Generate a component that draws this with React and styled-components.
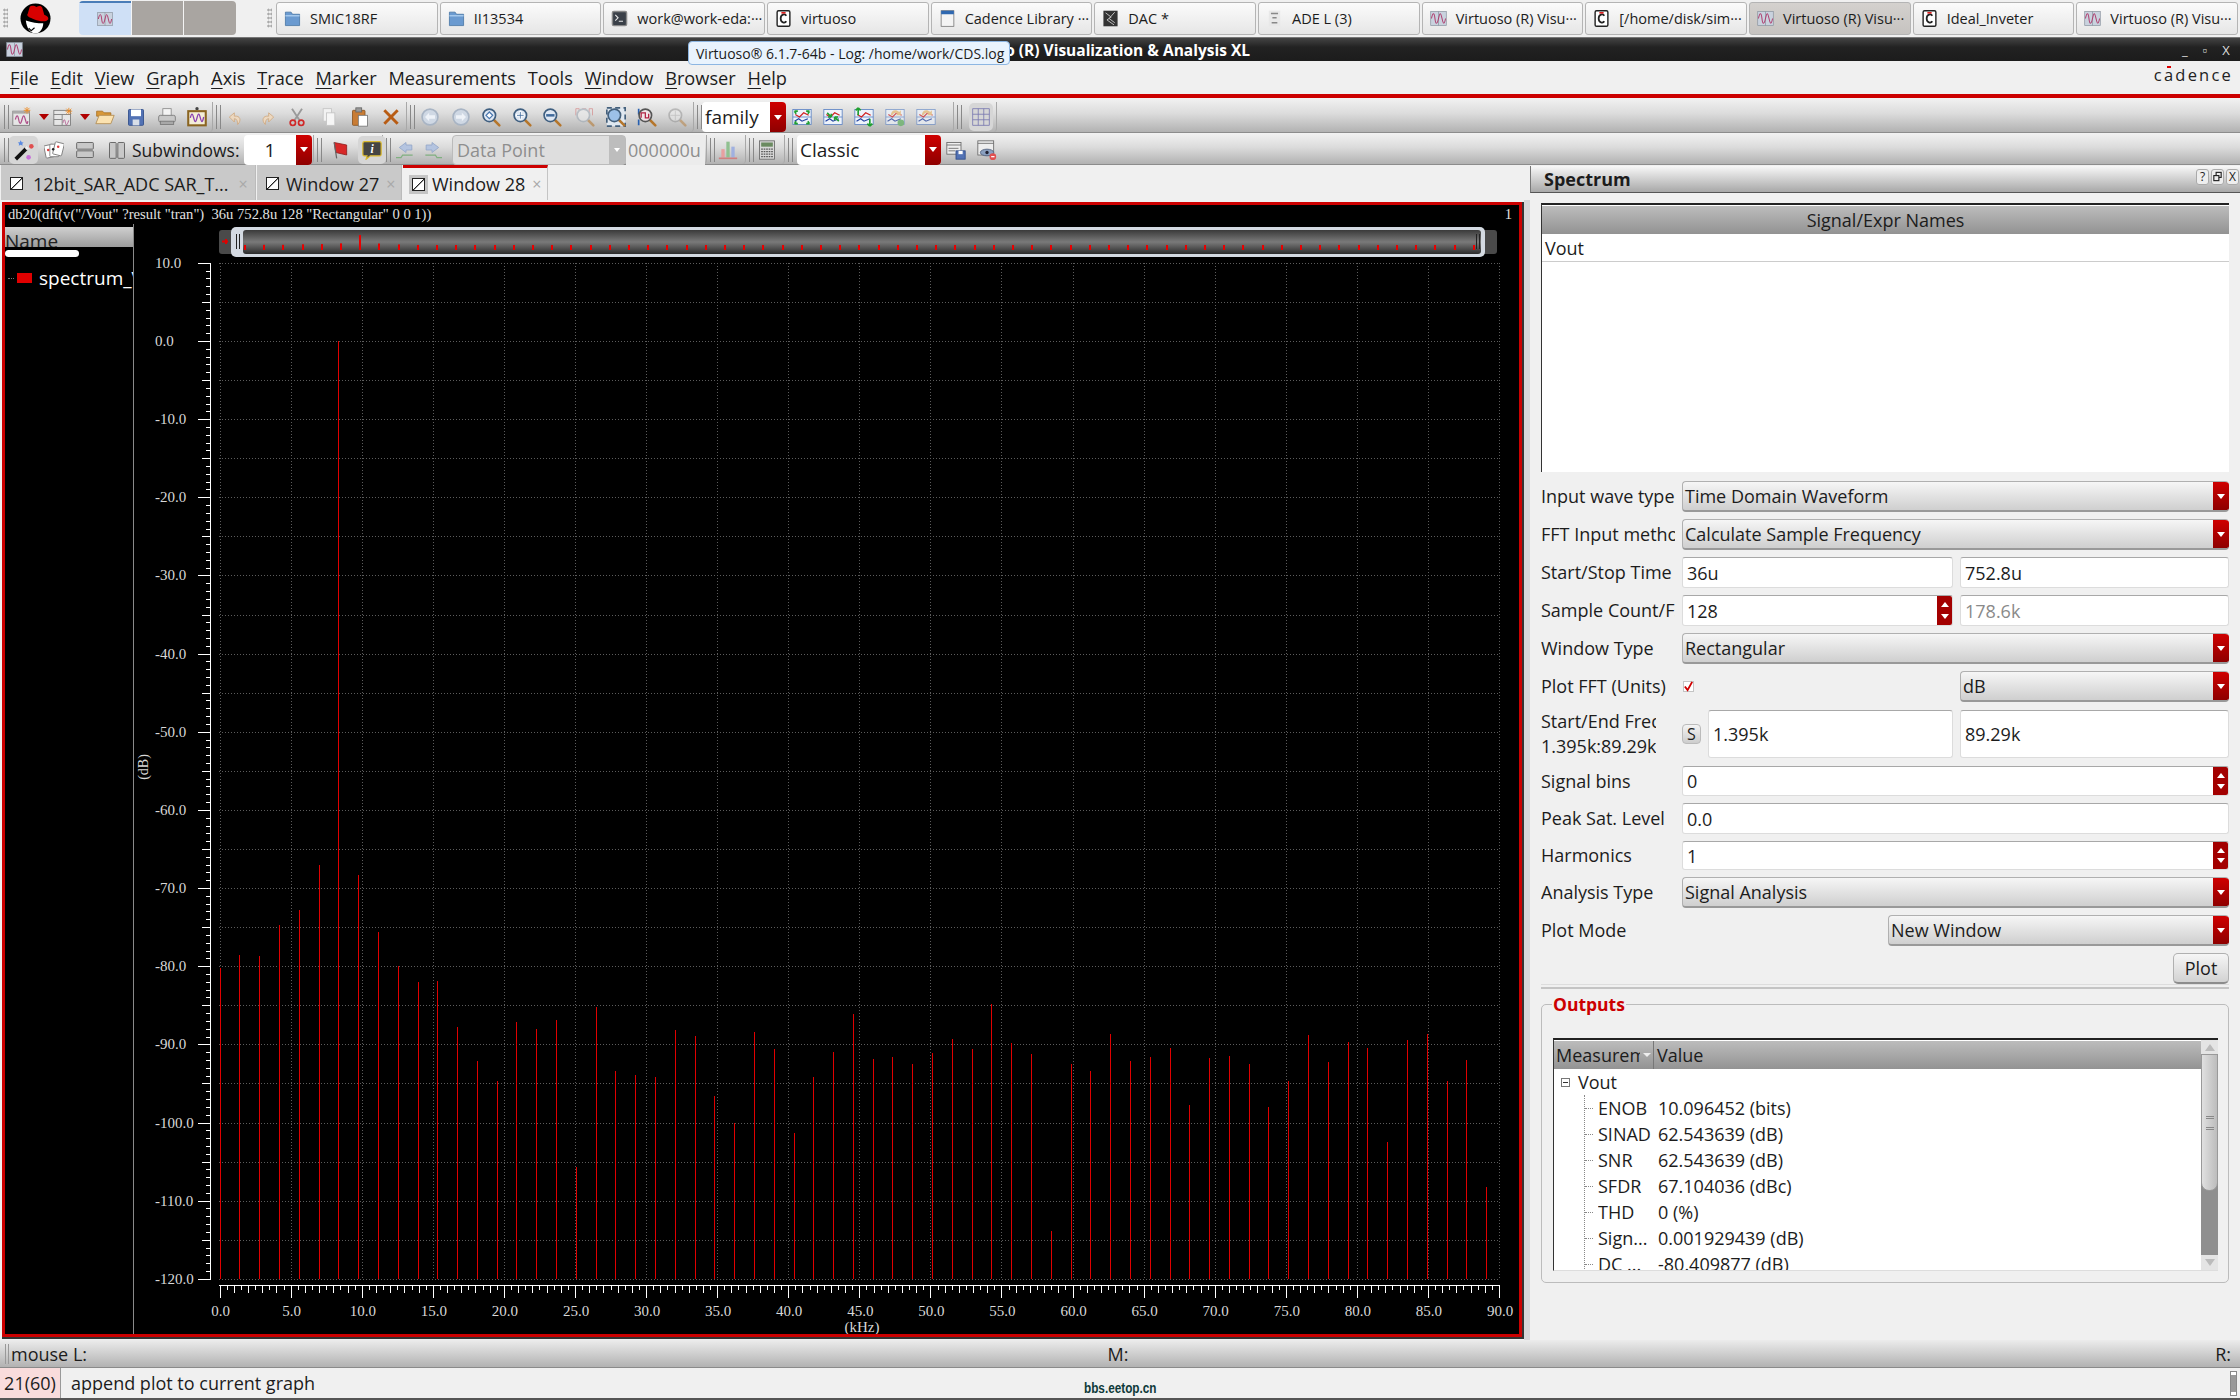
import React from 'react'
import styled, { createGlobalStyle } from 'styled-components'

const GlobalStyle = createGlobalStyle`
  html, body { margin: 0; padding: 0; background: #f0f0f0; }
  body { font-family: "Open Sans", "Liberation Sans", sans-serif; color: #1c1c1c; }
  * { box-sizing: border-box; }
`

const BAR = 'linear-gradient(#f2f2f2, #dcdcdc 45%, #b2b2b2)'
const RED = 'linear-gradient(#cf0000, #8e0000)'

const Page = styled.div`
  position: relative;
  width: 2240px;
  height: 1400px;
  overflow: hidden;
  display: flex;
  flex-direction: column;
  background: #f0f0f0;
`

/* --- panel / taskbar --- */
const Taskbar = styled.div`
  height: 36px;
  display: flex;
  align-items: center;
  background: #f0f0f0;
  flex-shrink: 0;
`
const Grip = styled.div`
  width: 5px;
  height: 20px;
  margin: 0 ${p => p.$after || 0}px 0 ${p => p.$before || 0}px;
  background-image: radial-gradient(#aaa 1px, transparent 1.2px);
  background-size: 3px 4px;
`
const Pager = styled.div`
  width: 157px;
  height: 34px;
  margin-left: 28px;
  display: grid;
  grid-template-columns: 52px 51px 1fr;
  gap: 1px;
  background: #f4f4f4;
  border-radius: 4px;
  overflow: hidden;
`
const PagerCell = styled.div`
  display: flex;
  align-items: center;
  justify-content: center;
  background: ${p => (p.$on ? '#cfe0f6' : '#a9a5a1')};
  border-top: ${p => (p.$on ? '2px solid #4a7db8' : 'none')};
`
const TaskList = styled.div`
  flex: 1;
  margin-left: 31px;
  margin-right: 2px;
  display: grid;
  grid-template-columns: repeat(12, 1fr);
  gap: 2px;
`
const TaskButton = styled.div`
  height: 33px;
  display: flex;
  align-items: center;
  gap: 9px;
  padding-left: 7px;
  overflow: hidden;
  white-space: nowrap;
  font-size: 14.5px;
  border: 1px solid #b4b4b4;
  border-radius: 3px;
  background: ${p => (p.$active ? 'linear-gradient(#d4d1ce, #c6c3c0)' : 'linear-gradient(#fbfbfb, #e6e6e6)')};
`

/* --- window title --- */
const TitleBar = styled.div`
  height: 24px;
  margin-top: 1px;
  display: flex;
  align-items: center;
  flex-shrink: 0;
  padding: 0 8px 0 6px;
  background: linear-gradient(#444, #222 40%, #1c1c1c);
  border-top: 1px solid #777;
  color: #fff;
`
const TitleText = styled.div`
  margin-left: auto;
  margin-right: 932px;
  font-size: 15.5px;
  font-weight: 700;
  white-space: nowrap;
`
const WinControls = styled.div`
  display: flex;
  gap: 15px;
  font-size: 13px;
  color: #ddd;
  width: 50px;
`
const Tip = styled.div`
  position: absolute;
  left: 688px;
  top: 41px;
  width: 322px;
  height: 24px;
  display: flex;
  align-items: center;
  padding-left: 7px;
  font-size: 14px;
  white-space: nowrap;
  background: #e9f3fd;
  border: 1px solid #8db6e2;
  border-radius: 4px;
  z-index: 5;
`

/* --- menu --- */
const MenuBar = styled.div`
  height: 33px;
  display: flex;
  align-items: center;
  padding-left: 10px;
  gap: 11.8px;
  font-size: 18.2px;
  background: #f0f0f0;
  flex-shrink: 0;
`
const MenuItem = styled.span`
  white-space: nowrap;
  u { text-underline-offset: 3px; text-decoration-thickness: 1px; }
`
const Logo = styled.div`
  margin-left: auto;
  margin-right: 7px;
  margin-top: -6px;
  font-size: 16.5px;
  letter-spacing: 2.2px;
  color: #222;
`
const LogoA = styled.span`
  position: relative;
  &::before {
    content: '';
    position: absolute;
    left: 3px;
    top: 3px;
    width: 4px;
    height: 2px;
    background: #d00;
  }
`
const RedRule = styled.div`
  height: 4px;
  background: #cc0000;
  flex-shrink: 0;
`

/* --- toolbars --- */
const Toolbar = styled.div`
  height: ${p => p.$h}px;
  display: flex;
  align-items: center;
  background: ${BAR};
  border-bottom: 1px solid #8c8c8c;
  flex-shrink: 0;
  padding: ${p => p.$pt}px 0 0 1px;
`
const ToolGroup = styled.div`
  height: 100%;
  display: flex;
  align-items: center;
  width: ${p => p.$w}px;
  flex-shrink: 0;
  border-right: 1px solid #a8a8a8;
  border-radius: 0 0 4px 0;
`
const Handle = styled.div`
  width: 5px;
  height: 24px;
  margin-left: 3px;
  flex-shrink: 0;
  border-left: 1px solid #888;
  border-right: 1px solid #888;
`
const Tool = styled.div`
  display: flex;
  align-items: center;
  justify-content: center;
  flex-shrink: 0;
  width: ${p => p.$w || 20}px;
  height: ${p => p.$h || 28}px;
  margin-left: ${p => p.$ml || 0}px;
  border-radius: 5px;
  background: ${p => (p.$on ? '#d6d6d6' : 'transparent')};
`
const DropMark = styled.div`
  width: 0;
  height: 0;
  border-left: 5px solid transparent;
  border-right: 5px solid transparent;
  border-top: 6px solid #b00000;
`
const Combo = styled.div`
  width: ${p => p.$w}px;
  height: 30px;
  margin-left: ${p => p.$ml || 0}px;
  flex-shrink: 0;
  display: flex;
  align-items: center;
  background: #fff;
  border-radius: 4px;
  overflow: hidden;
  font-size: 19px;
`
const ComboText = styled.div`
  flex: 1;
  padding-left: ${p => p.$pad ?? 3}px;
  text-align: ${p => p.$align || 'left'};
`
const RedDrop = styled.div`
  width: 16px;
  height: 100%;
  flex-shrink: 0;
  display: flex;
  align-items: center;
  justify-content: center;
  background: ${RED};
  &::after {
    content: '';
    border-left: 4px solid transparent;
    border-right: 4px solid transparent;
    border-top: 5px solid #fff;
  }
`
const ToolLabel = styled.div`
  width: 112px;
  margin-left: 5px;
  flex-shrink: 0;
  font-size: 17.5px;
  white-space: nowrap;
`
const DisabledCombo = styled.div`
  width: 174px;
  height: 30px;
  margin-left: 10px;
  flex-shrink: 0;
  display: flex;
  align-items: center;
  font-size: 18px;
  color: #8e8e8e;
  background: #dedede;
  border: 1px solid #bbb;
  border-radius: 4px;
  padding-left: 4px;
`
const DisabledDrop = styled.div`
  margin-left: auto;
  width: 16px;
  height: 100%;
  background: #bdbdbd;
  display: flex;
  align-items: center;
  justify-content: center;
  &::after {
    content: '';
    border-left: 3px solid transparent;
    border-right: 3px solid transparent;
    border-top: 4px solid #fff;
  }
`
const DisabledField = styled.div`
  width: 79px;
  height: 30px;
  flex-shrink: 0;
  display: flex;
  align-items: center;
  font-size: 18px;
  color: #8e8e8e;
  background: #ececec;
  overflow: hidden;
  padding-left: 2px;
`

/* --- main area --- */
const Main = styled.div`
  height: 1175px;
  flex-shrink: 0;
  display: flex;
`
const LeftCol = styled.div`
  width: 1524px;
  display: flex;
  flex-direction: column;
`
const TabRow = styled.div`
  height: 35px;
  padding-left: 1px;
  display: flex;
  flex-shrink: 0;
  background: #f0f0f0;
`
const Tab = styled.div`
  width: ${p => p.$w}px;
  display: flex;
  align-items: center;
  padding-left: 9px;
  padding-top: ${p => (p.$on ? 0 : 2)}px;
  gap: ${p => p.$gap || 7}px;
  font-size: 18px;
  white-space: nowrap;
  margin-right: 1px;
  background: ${p => (p.$on ? '#f0f0f0' : '#c9c9c9')};
  border-top: ${p => (p.$on ? '3px solid #cc0000' : 'none')};
  border-right: 1px solid ${p => (p.$on ? '#c4c4c4' : '#bbb')};
`
const TabIcon = styled.div`
  width: 13px;
  height: 13px;
  flex-shrink: 0;
  border: 1.5px solid #222;
  background: linear-gradient(135deg, #fff 47%, #222 48%, #222 54%, #fff 55%);
  outline: ${p => (p.$on ? '3px solid #c4c4c4' : 'none')};
`
const TabClose = styled.span`
  margin-left: auto;
  margin-right: 9px;
  font-size: 16px;
  color: #a8a8a8;
`
const PlotFrame = styled.div`
  width: 1522px;
  height: 1137px;
  margin: 2px 0 0 2px;
  border-right: 2px solid #333;
  border-bottom: 2px solid #333;
`
const PlotWindow = styled.div`
  width: 100%;
  height: 100%;
  border: 3px solid #cc0000;
  background: #000;
  display: flex;
  flex-direction: column;
  overflow: hidden;
`
const ExprLine = styled.div`
  height: 19px;
  flex-shrink: 0;
  display: flex;
  justify-content: space-between;
  align-items: center;
  padding: 0 7px 0 3px;
  font-family: "Liberation Serif", serif;
  font-size: 14.6px;
  white-space: pre;
  color: #e2e2e2;
`
const PlotBody = styled.div`
  flex: 1;
  display: flex;
  min-height: 0;
`
const Legend = styled.div`
  width: 129px;
  flex-shrink: 0;
  border-right: 1px solid #8a8a8a;
  padding-top: 3px;
  color: #fff;
`
const LegendHead = styled.div`
  height: 20px;
  overflow: hidden;
  font-size: 19px;
  line-height: 28px;
  color: #222;
  background: linear-gradient(#d0d0d0, #9c9c9c);
`
const LegendPill = styled.div`
  width: 74px;
  height: 7px;
  margin-top: 3px;
  background: #fff;
  border-radius: 4px;
`
const LegendRow = styled.div`
  display: flex;
  align-items: center;
  height: 26px;
  margin-top: 8px;
  white-space: nowrap;
  overflow: hidden;
  font-size: 19px;
`
const LegendDots = styled.div`
  width: 6px;
  height: 1px;
  margin: 0 3px;
  flex-shrink: 0;
  border-top: 1px dotted #777;
`
const Swatch = styled.div`
  width: 15px;
  height: 10px;
  flex-shrink: 0;
  margin-right: 7px;
  background: #e00000;
`
const Chart = styled.svg`
  display: block;
  flex-shrink: 0;
`
const Splitter = styled.div`
  width: 6px;
  margin-top: 35px;
  background: #d6d6d8;
`

/* --- spectrum panel --- */
const Panel = styled.div`
  flex: 1;
  display: flex;
  flex-direction: column;
  padding-top: 1px;
  font-size: 18px;
`
const PanelHead = styled.div`
  height: 27px;
  flex-shrink: 0;
  display: flex;
  align-items: center;
  padding: 0 1px 0 13px;
  font-size: 18px;
  font-weight: 700;
  background: linear-gradient(#f8f8f8, #a8a8a8);
  border-left: 1px solid #777;
  border-bottom: 1px solid #555;
`
const HeadButtons = styled.div`
  margin-left: auto;
  display: flex;
  gap: 2px;
  margin-top: -5px;
`
const HeadButton = styled.div`
  width: 13px;
  height: 16px;
  display: flex;
  align-items: center;
  justify-content: center;
  font-size: 12px;
  font-weight: 400;
  border: 1px solid #aaa;
  border-radius: 3px;
  background: #eee;
`
const PanelBody = styled.div`
  flex: 1;
  padding: 10px 11px 0 11px;
  display: flex;
  flex-direction: column;
`
const NameTable = styled.div`
  height: 269px;
  flex-shrink: 0;
  background: #fff;
  border-top: 2px solid #222;
  border-left: 1px solid #333;
  display: flex;
  flex-direction: column;
`
const NameHead = styled.div`
  height: 28px;
  margin-top: 1px;
  display: flex;
  align-items: center;
  justify-content: center;
  background: linear-gradient(#bcbcbc, #929292);
`
const NameRow = styled.div`
  height: 28px;
  display: flex;
  align-items: center;
  padding-left: 3px;
  border-bottom: 1px solid #ccc;
`
const Form = styled.div`
  margin-top: 9px;
  display: flex;
  flex-direction: column;
  gap: 7px;
`
const Row = styled.div`
  min-height: ${p => p.$h || 31}px;
  display: flex;
  align-items: center;
  gap: 7px;
`
const Label = styled.div`
  width: ${p => p.$w || 134}px;
  margin-right: ${p => p.$mr ?? 0}px;
  flex-shrink: 0;
  overflow: hidden;
  white-space: nowrap;
  line-height: 25px;
`
const Select = styled.div`
  height: 31px;
  flex: ${p => (p.$w ? `0 0 ${p.$w}px` : 1)};
  margin-left: ${p => (p.$push ? 'auto' : 0)};
  display: flex;
  align-items: center;
  padding-left: 2px;
  border: 1px solid #b0b0b0;
  border-bottom: 2px solid #999;
  border-right: 0;
  border-radius: 4px;
  overflow: hidden;
  background: linear-gradient(#f6f6f6, #cfcfcf);
`
const SelectText = styled.div`
  flex: 1;
`
const Field = styled.div`
  height: ${p => p.$h || 31}px;
  flex: ${p => (p.$w ? `0 0 ${p.$w}px` : 1)};
  display: flex;
  align-items: center;
  padding-left: ${p => p.$pad || 4}px;
  overflow: hidden;
  color: ${p => (p.$dim ? '#8a8a8a' : 'inherit')};
  background: #fff;
  border: 1px solid #dcdcdc;
  border-top: 1px solid #a8a8a8;
  border-radius: 3px;
`
const Spin = styled.div`
  margin-left: auto;
  margin-right: -1px;
  width: 16px;
  height: 100%;
  flex-shrink: 0;
  display: flex;
  flex-direction: column;
  align-items: center;
  justify-content: space-evenly;
  background: #a30000;
`
const SpinArrow = styled.div`
  width: 0;
  height: 0;
  border-left: 4px solid transparent;
  border-right: 4px solid transparent;
  border-${p => (p.$up ? 'bottom' : 'top')}: 5px solid #fff;
`
const CheckCell = styled.div`
  flex: 0 0 271px;
  display: flex;
  align-items: center;
`
const CheckBox = styled.div`
  width: 11px;
  height: 11px;
  margin-left: 1px;
  display: flex;
  align-items: center;
  justify-content: center;
  background: #fff;
  border: 1px solid #c4c4c4;
`
const SmallButton = styled.div`
  width: 19px;
  height: 20px;
  flex-shrink: 0;
  display: flex;
  align-items: center;
  justify-content: center;
  font-size: 16px;
  border: 1px solid #bbb;
  border-radius: 4px;
  background: linear-gradient(#f4f4f4, #cdcdcd);
`
const PlotButton = styled.div`
  width: 56px;
  height: 31px;
  margin-left: auto;
  display: flex;
  align-items: center;
  justify-content: center;
  border: 1px solid #b0b0b0;
  border-bottom: 2px solid #8c8c8c;
  border-radius: 5px;
  background: linear-gradient(#f6f6f6, #d2d2d2);
`
const Divider = styled.div`
  height: 5px;
  flex-shrink: 0;
  border-top: 1px solid #ddd;
  border-bottom: 2px solid #c4c4c4;
`
const OutputBox = styled.div`
  position: relative;
  height: 279px;
  margin-top: 15px;
  padding: 33px 10px 0 11px;
  border: 1px solid #bcbcbc;
  border-radius: 5px;
`
const OutputTitle = styled.div`
  position: absolute;
  left: 10px;
  top: -13px;
  padding: 0 1px;
  font-size: 17.5px;
  font-weight: 700;
  color: #cc0000;
  background: #f0f0f0;
`
const TreeTable = styled.div`
  height: 233px;
  display: flex;
  background: #fff;
  border-top: 2px solid #222;
  border-left: 1px solid #333;
  border-bottom: 1px solid #ddd;
  overflow: hidden;
`
const TreeMain = styled.div`
  flex: 1;
  min-width: 0;
`
const TreeHead = styled.div`
  height: 28px;
  margin-top: 1px;
  display: flex;
  background: linear-gradient(#bcbcbc, #939393);
`
const HeadCell = styled.div`
  width: ${p => p.$w || 'auto'};
  padding-left: ${p => p.$pad || 2}px;
  display: flex;
  align-items: center;
  overflow: hidden;
  white-space: nowrap;
  border-right: ${p => (p.$w ? '1px solid #777' : 'none')};
`
const HeadClip = styled.div`
  width: 84px;
  overflow: hidden;
  flex-shrink: 0;
`
const SortMark = styled.span`
  margin-left: 3px;
  width: 0;
  height: 0;
  border-left: 4px solid transparent;
  border-right: 4px solid transparent;
  border-top: 4px solid #eee;
  flex-shrink: 0;
`
const ParentRow = styled.div`
  height: 26px;
  display: flex;
  align-items: center;
  padding-left: 7px;
`
const Expander = styled.div`
  width: 9px;
  height: 9px;
  margin-right: 8px;
  display: flex;
  align-items: center;
  justify-content: center;
  border: 1px solid #777;
  &::after {
    content: '';
    width: 5px;
    height: 1px;
    background: #333;
  }
`
const Children = styled.div`
  margin-left: 30px;
  border-left: 1px dotted #888;
`
const ChildRow = styled.div`
  height: 26px;
  display: flex;
  align-items: center;
  white-space: nowrap;
`
const ChildDots = styled.div`
  width: 8px;
  margin-right: 5px;
  border-top: 1px dotted #888;
`
const ChildName = styled.div`
  width: 60px;
  overflow: hidden;
`
const Scrollbar = styled.div`
  width: 17px;
  flex-shrink: 0;
  display: flex;
  flex-direction: column;
  background: #8f8f8f;
`
const ScrollEnd = styled.div`
  height: ${p => p.$h}px;
  flex-shrink: 0;
  display: flex;
  align-items: center;
  justify-content: center;
  background: #e4e4e4;
  &::after {
    content: '';
    border-left: 5px solid transparent;
    border-right: 5px solid transparent;
    border-${p => (p.$up ? 'bottom' : 'top')}: 7px solid #bbb;
  }
`
const ScrollThumb = styled.div`
  height: 137px;
  flex-shrink: 0;
  display: flex;
  align-items: center;
  justify-content: center;
  background: linear-gradient(90deg, #e0e0e0, #bcbcbc);
  border-radius: 0 0 8px 8px;
  border: 1px solid #999;
  &::after {
    content: '';
    width: 8px;
    height: 8px;
    border-top: 3px double #888;
    border-bottom: 3px double #888;
  }
`
const ScrollGap = styled.div`
  flex: 1;
`

/* --- status --- */
const StatusBar = styled.div`
  height: 28px;
  flex-shrink: 0;
  display: flex;
  align-items: center;
  justify-content: space-between;
  padding: 0 9px 0 5px;
  background: linear-gradient(#ececec, #b2b2b2);
  border-bottom: 1px solid #8a8a8a;
  font-size: 18px;
`
const StatusSide = styled.div`
  display: flex;
  align-items: center;
  gap: 2px;
  width: 300px;
  justify-content: ${p => (p.$end ? 'flex-end' : 'flex-start')};
`
const StatusGrip = styled.div`
  width: 4px;
  height: 20px;
  border-left: 1px solid #999;
  border-right: 1px solid #999;
`
const MessageBar = styled.div`
  flex: 1;
  min-height: 0;
  display: flex;
  align-items: center;
  font-size: 18px;
  border-bottom: 2px solid #555;
`
const LineNo = styled.div`
  width: 61px;
  height: 100%;
  display: flex;
  align-items: center;
  justify-content: center;
  background: #f9dcdc;
  border-right: 1px solid #999;
`
const Message = styled.div`
  width: 1023px;
  padding-left: 10px;
`
const Watermark = styled.div`
  font-family: "Liberation Sans", sans-serif;
  font-size: 14px;
  font-weight: 700;
  color: #0e3a3a;
  padding-top: 9px;
  transform: scaleX(0.84);
  transform-origin: left center;
`
const MiniScroll = styled.div`
  margin-left: auto;
  margin-right: 3px;
  width: 7px;
  height: 25px;
  border: 1px solid #888;
  background: linear-gradient(#fff 15%, #999 15%, #999 85%, #fff 85%);
`

/* --- icons --- */
const Svg = styled.svg`
  display: block;
  flex-shrink: 0;
  opacity: ${p => p.$o || 1};
`
const WAVE = 'M4 12c1.5-6 3-6 4 0s2.5 6 4 0 2.5-6 4 0 2.5 6 3 2'
const Glass = ({ children, lens = '#dfe8f4', ring = '#3f5f80' }) => (
  <>
    <path d="M15 15l7 7" stroke="#b5762c" strokeWidth="3" strokeLinecap="round" />
    <circle cx="10" cy="10" r="7.5" fill={lens} stroke={ring} strokeWidth="2" />
    {children}
  </>
)
const traceBox = extra => (
  <>
    <rect x="1" y="3" width="22" height="18" fill="#eef3fb" stroke="#5b82c4" />
    <path d="M1 12h22" stroke="#5b82c4" />
    <path d="M4 9l5 3 5-5 6 3" fill="none" stroke="#d02020" strokeWidth="1.4" />
    <path d="M3 17l5-3 4 3 7-3" fill="none" stroke="#2040a0" strokeWidth="1.4" />
    {extra}
  </>
)
const ICONS = {
  wave: (
    <>
      <rect x="1" y="2" width="22" height="20" fill="#c9d2de" stroke="#8b94a0" />
      <path d="M12 2v20" stroke="#8b94a0" />
      <path d="M2 12c2-9 4-9 5 0s3 9 5 0 3-9 5 0 3 9 5 0" fill="none" stroke="#b04070" strokeWidth="1.5" />
    </>
  ),
  newWin: (
    <>
      <rect x="1" y="5" width="20" height="17" fill="#e6e6e6" stroke="#777" />
      <rect x="1" y="5" width="20" height="3" fill="#aaa" />
      <path d={WAVE} transform="translate(0 3)" fill="none" stroke="#b0508a" strokeWidth="1.5" />
      <path d="M18 0v8M14 4h8M15 1l6 6M21 1l-6 6" stroke="#ee8a20" strokeWidth="1" />
    </>
  ),
  newTbl: (
    <>
      <rect x="1" y="4" width="20" height="18" fill="#e6e6e6" stroke="#777" />
      <path d="M1 9h20M11 9v13M1 15h10" stroke="#777" />
      <path d="M12 19c1-5 2-5 3 0s2 2 4-3" fill="none" stroke="#b0508a" />
      <path d="M19 1v8M15 5h8M16 2l6 6M22 2l-6 6" stroke="#ee8a20" />
    </>
  ),
  folder: (
    <>
      <path d="M2 5h7l2 2h8v4H2z" fill="#d89838" stroke="#a87020" />
      <path d="M5 10h18l-4 10H1z" fill="#fbe2b0" stroke="#b08a50" />
    </>
  ),
  save: (
    <>
      <rect x="3" y="3" width="18" height="19" rx="1" fill="#5272b4" stroke="#2c4a88" />
      <rect x="6" y="3" width="12" height="8" fill="#fff" />
      <rect x="8" y="15" width="8" height="7" fill="#d8dee8" />
    </>
  ),
  print: (
    <>
      <rect x="7" y="2" width="10" height="9" fill="#f4f4f4" stroke="#888" />
      <rect x="2" y="10" width="20" height="8" rx="2" fill="#c8c8c8" stroke="#777" />
      <rect x="4" y="17" width="16" height="4" fill="#a8a8a8" stroke="#777" />
    </>
  ),
  frame: (
    <>
      <circle cx="12" cy="2" r="2" fill="#444" />
      <rect x="1.5" y="5" width="21" height="17" fill="#f4eed8" stroke="#8a6420" strokeWidth="2.5" />
      <path d="M4 13c1.5-6 2.5-6 4 0s2.5 6 4 0 2.5-6 4 0 2.5 6 4-1" fill="none" stroke="#8a40b0" strokeWidth="1.6" />
    </>
  ),
  undo: <path d="M14 21c5-5 3-11-4-10V7L4 12l6 6v-4c3 0 4 3 4 7z" fill="#ecd8c0" stroke="#cfa880" />,
  redo: <path d="M10 21c-5-5-3-11 4-10V7l6 5-6 6v-4c-3 0-4 3-4 7z" fill="#ecd8c0" stroke="#cfa880" />,
  cut: (
    <>
      <path d="M6 2l9 14M18 2L9 16" stroke="#9a9a9a" strokeWidth="2.2" />
      <circle cx="7" cy="19" r="3.2" fill="none" stroke="#d02828" strokeWidth="2" />
      <circle cx="17" cy="19" r="3.2" fill="none" stroke="#d02828" strokeWidth="2" />
    </>
  ),
  copy: (
    <>
      <rect x="5" y="2" width="10" height="15" fill="#f2f2f2" stroke="#c4c4c4" />
      <rect x="9" y="7" width="10" height="15" fill="#f6f6f6" stroke="#c4c4c4" />
    </>
  ),
  paste: (
    <>
      <rect x="3" y="4" width="15" height="18" rx="1" fill="#c97c34" stroke="#8a5420" />
      <rect x="7" y="1" width="7" height="5" fill="#999" stroke="#666" />
      <rect x="10" y="10" width="11" height="13" fill="#fff" stroke="#777" />
    </>
  ),
  del: <path d="M4 4l16 16M20 4L4 20" stroke="#b85c14" strokeWidth="3.5" />,
  back: (
    <>
      <circle cx="12" cy="12" r="9.5" fill="#cfd8e4" stroke="#a8b4c4" strokeWidth="2" />
      <path d="M6 12l5-5v3h7v4h-7v3z" fill="#eef2f8" />
    </>
  ),
  fwd: (
    <>
      <circle cx="12" cy="12" r="9.5" fill="#cfd8e4" stroke="#a8b4c4" strokeWidth="2" />
      <path d="M18 12l-5-5v3H6v4h7v3z" fill="#eef2f8" />
    </>
  ),
  zoomFit: <Glass><path d="M6 10l4-4 4 4-4 4z" fill="#fff" stroke="#4a78b0" strokeWidth="1.5" /></Glass>,
  zoomIn: (
    <Glass>
      <path d="M10 5v10M5 10h10" stroke="#fff" strokeWidth="3" />
      <path d="M10 6v8M6 10h8" stroke="#3f6a9c" />
    </Glass>
  ),
  zoomOut: <Glass><path d="M5 10h10" stroke="#3f6a9c" strokeWidth="3" /></Glass>,
  zoomPulse: (
    <g opacity="0.55">
      <path d="M1 10V2h4v8h4V2h4v8h4V2h4v8" fill="none" stroke="#d06060" />
      <Glass lens="#eee" ring="#9aa6b2" />
    </g>
  ),
  zoomBox: (
    <>
      <rect x="1" y="1" width="22" height="22" fill="#e0e8f0" stroke="#44607c" strokeDasharray="6 4" strokeWidth="2" />
      <Glass lens="#9cc0e8" ring="#44607c" />
    </>
  ),
  zoomX: (
    <>
      <path d="M2 2v7M2 22v-7" stroke="#2860b0" strokeWidth="2" />
      <Glass lens="#f0e4e8" ring="#555">
        <path d="M5 13V7h5v6h4V8" fill="none" stroke="#b02040" strokeWidth="1.5" />
      </Glass>
    </>
  ),
  zoomFade: <g opacity="0.45"><Glass lens="#eee" ring="#888"><path d="M10 4v12M4 10h12" stroke="#aaa" /></Glass></g>,
  traceA: traceBox(<path d="M3 5l4 0M3 5l2 3M21 5l-4 0M21 5l-2 3M3 20l4 0M3 20l2-3M21 20h-4M21 20l-2-3" stroke="#20a030" strokeWidth="2" />),
  traceB: traceBox(<path d="M5 7l5 5M10 12V8M10 12H6M19 17l-5-5M14 12v4M14 12h4" stroke="#20a030" strokeWidth="2" />),
  traceC: traceBox(<path d="M5 10V1M5 1L2 4M5 1l3 3M19 14v9M19 23l-3-3M19 23l3-3" stroke="#20a030" strokeWidth="2" />),
  traceD: (
    <g opacity="0.7">
      {traceBox(<path d="M7 10c0-6 6-8 10-4l2-2v6h-6l2-2c-2-2-5-1-6 2z" fill="#e8b870" />)}
      <circle cx="19" cy="19" r="4" fill="#60b060" />
    </g>
  ),
  traceE: <g opacity="0.7">{traceBox(<path d="M7 10c0-6 6-8 10-4l2-2v6h-6l2-2c-2-2-5-1-6 2z" fill="#e8b870" />)}</g>,
  grid: <path d="M2 2h20v20H2zM2 8.7h20M2 15.3h20M8.7 2v20M15.3 2v20" fill="none" stroke="#7878b0" />,
  wand: (
    <>
      <path d="M3 22L15 10" stroke="#111" strokeWidth="4" />
      <path d="M14 11l2-2" stroke="#eee" strokeWidth="4" />
      <path d="M10 2l1.500 3 3 .5-2 2 .5 3-3-1.500-3 1.500.5-3-2-2 3-.5z" fill="#5a8ae0" transform="scale(.7) translate(2 0)" />
      <circle cx="20" cy="8" r="2.5" fill="#e05050" />
      <circle cx="17" cy="20" r="2.5" fill="#c870d8" />
    </>
  ),
  cards: (
    <>
      <rect x="1" y="6" width="11" height="15" rx="1" fill="#fff" stroke="#777" transform="rotate(-12 6 13)" />
      <rect x="7" y="5" width="11" height="15" rx="1" fill="#fff" stroke="#777" />
      <rect x="12" y="3" width="11" height="15" rx="1" fill="#fff" stroke="#777" transform="rotate(14 17 10)" />
      <circle cx="11" cy="11" r="1.5" fill="#222" />
      <circle cx="17" cy="8" r="1.5" fill="#e04040" />
      <circle cx="5" cy="12" r="1.5" fill="#e04040" />
    </>
  ),
  rows: (
    <>
      <rect x="2" y="3" width="20" height="8" rx="1" fill="#c8c8c8" stroke="#555" />
      <rect x="2" y="13" width="20" height="8" rx="1" fill="#c8c8c8" stroke="#555" />
    </>
  ),
  cols: (
    <>
      <rect x="3" y="3" width="8" height="19" rx="1" fill="#c8c8c8" stroke="#555" />
      <rect x="13" y="3" width="8" height="19" rx="1" fill="#c8c8c8" stroke="#555" />
    </>
  ),
  flag: (
    <>
      <path d="M5 3l15 3v12L7 15z" fill="#d82828" stroke="#902020" />
      <path d="M5 3l3 19" stroke="#666" strokeWidth="1.5" />
    </>
  ),
  info: (
    <>
      <path d="M4 2h17a2 2 0 0 1 2 2v13a2 2 0 0 1-2 2H10l-5 4 1-4H3a2 2 0 0 1-2-2V4a2 2 0 0 1 2-2z" fill="#444" stroke="#d8b830" strokeWidth="1.5" />
      <text x="12" y="15" fontSize="14" fontWeight="700" fontStyle="italic" fill="#fff" textAnchor="middle" fontFamily="Liberation Serif">i</text>
    </>
  ),
  prev: (
    <>
      <path d="M4 9l8-6v3h7v6h-7v3z" fill="#b4c4e0" stroke="#93a6c8" />
      <path d="M0 21h6l2-3h12" fill="none" stroke="#80b080" strokeWidth="1.5" />
    </>
  ),
  next: (
    <>
      <path d="M20 9l-8-6v3H5v6h7v3z" fill="#b4c4e0" stroke="#93a6c8" />
      <path d="M4 18h12l2 3h6" fill="none" stroke="#80b080" strokeWidth="1.5" />
    </>
  ),
  chart: (
    <>
      <rect x="4" y="11" width="4" height="10" fill="#e8a0a0" />
      <rect x="10" y="2" width="4" height="19" fill="#90c090" />
      <rect x="16" y="8" width="4" height="13" fill="#a0b0e0" />
      <path d="M1 22h22" stroke="#d08080" strokeWidth="2" />
    </>
  ),
  calc: (
    <>
      <rect x="3" y="1" width="18" height="22" fill="#d8d8d8" stroke="#666" />
      <rect x="5" y="3" width="14" height="5" fill="#6a8a60" />
      <path d="M5 11h14M5 14h14M5 17h14M5 20h14" stroke="#555" strokeWidth="1.5" strokeDasharray="2 1" />
    </>
  ),
  saveWin: (
    <>
      <rect x="1" y="3" width="17" height="14" fill="#eee" stroke="#666" />
      <path d="M1 6h17M3 10h12M3 13h8" stroke="#666" />
      <rect x="12" y="13" width="11" height="10" fill="#5272b4" stroke="#2c4a88" />
      <rect x="15" y="13" width="5" height="4" fill="#fff" />
    </>
  ),
  eyeWin: (
    <>
      <rect x="1" y="1" width="19" height="17" fill="#eee" stroke="#666" />
      <path d="M1 4h19" stroke="#666" />
      <ellipse cx="12" cy="15" rx="8" ry="4" fill="#8aa0c0" stroke="#4a5a78" />
      <circle cx="12" cy="15" r="2" fill="#223" />
      <circle cx="19" cy="20" r="4" fill="#e05050" />
      <path d="M17 20h4" stroke="#fff" strokeWidth="1.5" />
    </>
  ),
  folderBlue: (
    <>
      <path d="M2 3h8l2 3h10v16H2z" fill="#6a9ad0" stroke="#3a6a9c" />
      <path d="M2 8h20" stroke="#a4c8ec" strokeWidth="2" />
    </>
  ),
  term: (
    <>
      <rect x="2" y="2" width="20" height="20" rx="2" fill="#3a4048" stroke="#888" strokeWidth="2" />
      <path d="M6 7l4 4-4 4M11 16h6" fill="none" stroke="#e8e8e8" strokeWidth="1.5" />
    </>
  ),
  vir: (
    <>
      <rect x="3" y="1" width="18" height="22" rx="2" fill="#fff" stroke="#222" strokeWidth="2" />
      <path d="M16 8c-2-3-8-2-8 4s6 7 8 4" fill="none" stroke="#222" strokeWidth="2.5" />
      <rect x="9" y="3" width="6" height="2" fill="#d00" />
    </>
  ),
  lib: (
    <>
      <rect x="3" y="1" width="18" height="22" fill="#f4f4f4" stroke="#666" />
      <rect x="3" y="1" width="18" height="5" fill="#2f68b0" />
    </>
  ),
  dac: (
    <>
      <rect x="2" y="1" width="20" height="22" fill="#333" />
      <path d="M5 4l8 6-6 4 10 7M18 3l-8 9 8 6" fill="none" stroke="#bbb" strokeWidth="1.4" />
    </>
  ),
  ade: (
    <>
      <rect x="4" y="1" width="16" height="22" fill="#e8e8e8" />
      <path d="M7 5h10M9 11h6M8 18h8" stroke="#888" strokeWidth="2" />
    </>
  ),
  restore: (
    <>
      <rect x="9" y="3" width="11" height="11" fill="none" stroke="#222" strokeWidth="2.5" />
      <rect x="4" y="10" width="11" height="11" fill="#eee" stroke="#222" strokeWidth="2.5" />
    </>
  )
}
const Icon = ({ name, size = 20, o }) => (
  <Svg viewBox="0 0 24 24" width={size} height={size} $o={o}>{ICONS[name]}</Svg>
)
const Tools = ({ list }) =>
  list.map(([name, ml, o], i) => (
    <Tool key={i} $ml={ml}><Icon name={name} o={o} /></Tool>
  ))

/* --- chart data --- */
const TOPS = [
  968, 955, 956, 925, 910, 865, 341, 875, 932, 966, 982, 981, 1027, 1061, 1081, 1022, 1029, 1020, 1167, 1007, 1071,
  1075, 1077, 1030, 1036, 1096, 1123, 1032, 1049, 1133, 1077, 1052, 1014, 1059, 1057, 1064, 1053, 1039, 1049, 1004,
  1043, 1054, 1231, 1064, 1071, 1034, 1061, 1057, 1048, 1105, 1058, 1056, 1064, 1107, 1081, 1035, 1062, 1042, 1048,
  1142, 1040, 1034, 1081, 1060, 1187
]
const fx = khz => 219.6 + khz * 14.216
const fy = db => 341 - db * 7.815
const range = (from, to, step) => {
  const out = []
  for (let v = from; v <= to + 1e-6; v += step) out.push(v)
  return out
}
const yGrid = range(-120, 10, 5)
const xGrid = range(0, 90, 5)
const yTicks = range(-120, 10, 1)
  .map(d => {
    const y = Math.round(fy(d)) + 0.5
    const len = d % 10 === 0 ? 13 : d % 5 === 0 ? 9 : 5
    return `M${211 - len} ${y}H211`
  })
  .join('')
const xTicks = range(0, 90, 0.5)
  .map(k => {
    const x = Math.round(fx(k)) + 0.5
    const len = k % 5 === 0 ? 13 : k % 1 === 0 ? 8 : 5
    return `M${x} 1285V${1285 + len}`
  })
  .join('')
const yLabels = range(-12, 1, 1).map(i => i * 10)

const Graph = () => (
  <Chart width="1385" height="1110" viewBox="134 224 1385 1110">
    <defs>
      <linearGradient id="sl" x1="0" y1="0" x2="0" y2="1">
        <stop offset="0" stopColor="#3a3a3a" />
        <stop offset="0.5" stopColor="#7a7a7a" />
        <stop offset="1" stopColor="#2c2c2c" />
      </linearGradient>
    </defs>
    {/* overview slider */}
    <rect x="219" y="230" width="1278" height="24" rx="3" fill="#4a4a4a" />
    <rect x="231" y="227" width="1254" height="30" rx="5" fill="#d4dae2" />
    <rect x="243" y="230" width="1238" height="24" rx="3" fill="url(#sl)" />
    <path d="M222 241.5h6M226 239v5" stroke="#e00000" strokeWidth="2" />
    <path d="M236.5 234v15M239.5 234v15M1476.5 234v15M1479.5 234v15" stroke="#222" />
    {TOPS.map((t, i) => {
      const x = Math.round(244 + i * 19.2)
      const h = Math.max(5, (15 * (1279 - t)) / 938)
      return <rect key={i} x={x} y={250 - h} width="2" height={h} fill="#e80000" />
    })}
    {/* grid */}
    <g stroke="#5c5c5c" strokeDasharray="1 2" shapeRendering="crispEdges">
      {yGrid.map(d => {
        const y = Math.round(fy(d)) + 0.5
        return <path key={d} d={`M219 ${y}H1499`} />
      })}
      {xGrid.map(k => {
        const x = Math.round(fx(k)) + 0.5
        return <path key={k} d={`M${x} 263V1279`} />
      })}
    </g>
    {/* stems */}
    <g fill="#e00000" shapeRendering="crispEdges">
      {TOPS.map((t, i) => (
        <rect key={i} x={Math.round(219.6 + i * 19.79)} y={t} width="1" height={1279 - t} />
      ))}
    </g>
    {/* axes */}
    <path d={`M210.5 263V1279${yTicks}`} stroke="#fff" fill="none" shapeRendering="crispEdges" />
    <path d={`M219 1285.5H1499${xTicks}`} stroke="#fff" fill="none" shapeRendering="crispEdges" />
    <g fontFamily="Liberation Serif, serif" fontSize="15" fill="#d8d8d8">
      {yLabels.map(d => (
        <text key={d} x="155" y={Math.round(fy(d)) + 5}>{d.toFixed(1)}</text>
      ))}
      {xGrid.map(k => (
        <text key={k} x={fx(k) + 1} y="1316" textAnchor="middle">{k.toFixed(1)}</text>
      ))}
      <text x="862" y="1332" textAnchor="middle">(kHz)</text>
      <text x="0" y="0" fontSize="14" textAnchor="middle" transform="translate(148 767) rotate(-90)">(dB)</text>
    </g>
  </Chart>
)

const TASKS = [
  ['folderBlue', 'SMIC18RF'],
  ['folderBlue', 'II13534'],
  ['term', 'work@work-eda:···'],
  ['vir', 'virtuoso'],
  ['lib', 'Cadence Library ···'],
  ['dac', 'DAC *'],
  ['ade', 'ADE L (3)'],
  ['wave', 'Virtuoso (R) Visu···'],
  ['vir', '[/home/disk/sim···'],
  ['wave', 'Virtuoso (R) Visu···', true],
  ['vir', 'Ideal_Inveter'],
  ['wave', 'Virtuoso (R) Visu···']
]

const MENUS = [
  ['F', 'ile'], ['E', 'dit'], ['V', 'iew'], ['G', 'raph'], ['A', 'xis'], ['T', 'race'], ['M', 'arker'],
  ['', 'Measurements'], ['', 'Tools'], ['W', 'indow'], ['B', 'rowser'], ['H', 'elp']
]

const MEASURES = [
  ['ENOB', '10.096452 (bits)'],
  ['SINAD', '62.543639 (dB)'],
  ['SNR', '62.543639 (dB)'],
  ['SFDR', '67.104036 (dBc)'],
  ['THD', '0 (%)'],
  ['Sign...', '0.001929439 (dB)'],
  ['DC ...', '-80.409877 (dB)']
]

const Drop = ({ text, w, push }) => (
  <Select $w={w} $push={push}>
    <SelectText>{text}</SelectText>
    <RedDrop />
  </Select>
)
const SpinButtons = () => (
  <Spin>
    <SpinArrow $up />
    <SpinArrow />
  </Spin>
)

export default function App() {
  return (
    <Page>
      <GlobalStyle />
      <Taskbar>
        <Grip $before={3} $after={12} />
        <Svg viewBox="0 0 32 32" width="31" height="31">
          <circle cx="16" cy="16" r="15.5" fill="#000" />
          <path d="M6 18c6 2 12 3 18 3 0 6-4 10.500-8 10.500-6-.5-9-6-10-13.500z" fill="#fff" />
          <path d="M8 11l2-7c2-2 5-1 7 0 2-1 5-2 6 1l2 7c3 1 5 3 4 5-2 3-9 2-14 0S6 13 8 11z" fill="#d80000" />
          <path d="M3 12c1 3 6 5 11 7" fill="none" stroke="#000" strokeWidth="1" />
          <path d="M9 26l2.500 2.500 3.500-3" fill="none" stroke="#000" strokeWidth="1.200" />
        </Svg>
        <Pager>
          <PagerCell $on><Icon name="wave" size={16} /></PagerCell>
          <PagerCell />
          <PagerCell />
        </Pager>
        <Grip $before={31} $after={-27} />
        <TaskList>
          {TASKS.map(([icon, text, active], i) => (
            <TaskButton key={i} $active={active}>
              <Icon name={icon} size={17} />
              {text}
            </TaskButton>
          ))}
        </TaskList>
      </Taskbar>

      <TitleBar>
        <Icon name="wave" size={17} />
        <TitleText>Virtuoso (R) Visualization &amp; Analysis XL</TitleText>
        <WinControls><span>_</span><span>▫</span><span>X</span></WinControls>
      </TitleBar>
      <Tip>Virtuoso® 6.1.7-64b - Log: /home/work/CDS.log</Tip>

      <MenuBar>
        {MENUS.map(([u, rest]) => (
          <MenuItem key={rest}>{u && <u>{u}</u>}{rest}</MenuItem>
        ))}
        <Logo>c<LogoA>a</LogoA>dence</Logo>
      </MenuBar>
      <RedRule />

      <Toolbar $h={35} $pt={4}>
        <ToolGroup $w={212}>
          <Handle />
          <Tool $ml={3}><Icon name="newWin" /></Tool>
          <Tool $w={10} $ml={7}><DropMark /></Tool>
          <Tool $ml={4}><Icon name="newTbl" /></Tool>
          <Tool $w={10} $ml={7}><DropMark /></Tool>
          <Tools list={[['folder', 5], ['save', 11], ['print', 11], ['frame', 10]]} />
        </ToolGroup>
        <ToolGroup $w={194}>
          <Handle />
          <Tools list={[['undo', 5], ['redo', 11], ['cut', 10], ['copy', 12], ['paste', 11], ['del', 11]]} />
        </ToolGroup>
        <ToolGroup $w={287}>
          <Handle />
          <Tools
            list={[
              ['back', 5], ['fwd', 11], ['zoomFit', 10], ['zoomIn', 11], ['zoomOut', 10], ['zoomPulse', 13],
              ['zoomBox', 11], ['zoomX', 11], ['zoomFade', 10]
            ]}
          />
        </ToolGroup>
        <ToolGroup $w={260}>
          <Handle />
          <Combo $w={84}>
            <ComboText>family</ComboText>
            <RedDrop />
          </Combo>
          <Tools list={[['traceA', 6], ['traceB', 11], ['traceC', 11], ['traceD', 11], ['traceE', 11]]} />
        </ToolGroup>
        <ToolGroup $w={43}>
          <Handle />
          <Tool $w={24} $h={28} $ml={7} $on><Icon name="grid" /></Tool>
        </ToolGroup>
      </Toolbar>

      <Toolbar $h={32} $pt={2}>
        <ToolGroup $w={313}>
          <Handle />
          <Tool $w={29} $on><Icon name="wand" size={22} /></Tool>
          <Tools list={[['cards', 6], ['rows', 11], ['cols', 12]]} />
          <ToolLabel>Subwindows:</ToolLabel>
          <Combo $w={68}>
            <ComboText $align="center" $pad={0}>1</ComboText>
            <RedDrop />
          </Combo>
        </ToolGroup>
        <ToolGroup $w={69}>
          <Handle />
          <Tool $ml={8}><Icon name="flag" /></Tool>
          <Tool $w={28} $ml={8} $on><Icon name="info" /></Tool>
        </ToolGroup>
        <ToolGroup $w={324}>
          <Handle />
          <Tools list={[['prev', 5], ['next', 6]]} />
          <DisabledCombo>
            Data Point
            <DisabledDrop />
          </DisabledCombo>
          <DisabledField>000000u</DisabledField>
        </ToolGroup>
        <ToolGroup $w={39}>
          <Handle />
          <Tool $ml={3}><Icon name="chart" /></Tool>
        </ToolGroup>
        <ToolGroup $w={39}>
          <Handle />
          <Tool $ml={3}><Icon name="calc" /></Tool>
        </ToolGroup>
        <Handle />
        <Combo $w={144} $ml={4}>
          <ComboText>Classic</ComboText>
          <RedDrop />
        </Combo>
        <Tools list={[['saveWin', 5], ['eyeWin', 11]]} />
      </Toolbar>

      <Main>
        <LeftCol>
          <TabRow>
            <Tab $w={255} $gap={10}>
              <TabIcon />
              12bit_SAR_ADC SAR_T...
              <TabClose>×</TabClose>
            </Tab>
            <Tab $w={145}>
              <TabIcon />
              Window 27
              <TabClose>×</TabClose>
            </Tab>
            <Tab $w={145} $on>
              <TabIcon $on />
              Window 28
              <TabClose>×</TabClose>
            </Tab>
          </TabRow>
          <PlotFrame>
            <PlotWindow>
              <ExprLine>
                <span>db20(dft(v("/Vout" ?result "tran")  36u 752.8u 128 "Rectangular" 0 0 1))</span>
                <span>1</span>
              </ExprLine>
              <PlotBody>
                <Legend>
                  <LegendHead>Name</LegendHead>
                  <LegendPill />
                  <LegendRow>
                    <LegendDots />
                    <Swatch />
                    spectrum_Vout
                  </LegendRow>
                </Legend>
                <Graph />
              </PlotBody>
            </PlotWindow>
          </PlotFrame>
        </LeftCol>
        <Splitter />
        <Panel>
          <PanelHead>
            Spectrum
            <HeadButtons>
              <HeadButton>?</HeadButton>
              <HeadButton><Icon name="restore" size={11} /></HeadButton>
              <HeadButton>X</HeadButton>
            </HeadButtons>
          </PanelHead>
          <PanelBody>
            <NameTable>
              <NameHead>Signal/Expr Names</NameHead>
              <NameRow>Vout</NameRow>
            </NameTable>
            <Form>
              <Row><Label>Input wave type</Label><Drop text="Time Domain Waveform" /></Row>
              <Row><Label>FFT Input method</Label><Drop text="Calculate Sample Frequency" /></Row>
              <Row><Label>Start/Stop Time</Label><Field $w={271}>36u</Field><Field>752.8u</Field></Row>
              <Row>
                <Label>Sample Count/Fs</Label>
                <Field $w={271}>128<SpinButtons /></Field>
                <Field $dim>178.6k</Field>
              </Row>
              <Row><Label>Window Type</Label><Drop text="Rectangular" /></Row>
              <Row>
                <Label>Plot FFT (Units)</Label>
                <CheckCell>
                  <CheckBox>
                    <Svg viewBox="0 0 12 12" width="11" height="11">
                      <path d="M2 6l3 4 5-9" fill="none" stroke="#d00000" strokeWidth="2" />
                    </Svg>
                  </CheckBox>
                </CheckCell>
                <Drop text="dB" />
              </Row>
              <Row $h={48}>
                <Label $w={115} $mr={19}>Start/End Freq<br />1.395k:89.29k</Label>
                <SmallButton>S</SmallButton>
                <Field $w={245} $h={48}>1.395k</Field>
                <Field $h={48}>89.29k</Field>
              </Row>
              <Row $h={30}><Label>Signal bins</Label><Field $h={30}>0<SpinButtons /></Field></Row>
              <Row><Label>Peak Sat. Level</Label><Field>0.0</Field></Row>
              <Row $h={29}><Label>Harmonics</Label><Field $h={29}>1<SpinButtons /></Field></Row>
              <Row><Label>Analysis Type</Label><Drop text="Signal Analysis" /></Row>
              <Row><Label>Plot Mode</Label><Drop text="New Window" w={341} push /></Row>
              <Row><PlotButton>Plot</PlotButton></Row>
            </Form>
            <Divider />
            <OutputBox>
              <OutputTitle>Outputs</OutputTitle>
              <TreeTable>
                <TreeMain>
                  <TreeHead>
                    <HeadCell $w="100px"><HeadClip>Measurement</HeadClip><SortMark /></HeadCell>
                    <HeadCell $pad={3}>Value</HeadCell>
                  </TreeHead>
                  <ParentRow><Expander />Vout</ParentRow>
                  <Children>
                    {MEASURES.map(([name, value]) => (
                      <ChildRow key={name}>
                        <ChildDots />
                        <ChildName>{name}</ChildName>
                        {value}
                      </ChildRow>
                    ))}
                  </Children>
                </TreeMain>
                <Scrollbar>
                  <ScrollEnd $h={14} $up />
                  <ScrollThumb />
                  <ScrollGap />
                  <ScrollEnd $h={15} />
                </Scrollbar>
              </TreeTable>
            </OutputBox>
          </PanelBody>
        </Panel>
      </Main>

      <StatusBar>
        <StatusSide><StatusGrip />mouse L:</StatusSide>
        <span>M:</span>
        <StatusSide $end>R:</StatusSide>
      </StatusBar>
      <MessageBar>
        <LineNo>21(60)</LineNo>
        <Message>append plot to current graph</Message>
        <Watermark>bbs.eetop.cn</Watermark>
        <MiniScroll />
      </MessageBar>
    </Page>
  )
}
